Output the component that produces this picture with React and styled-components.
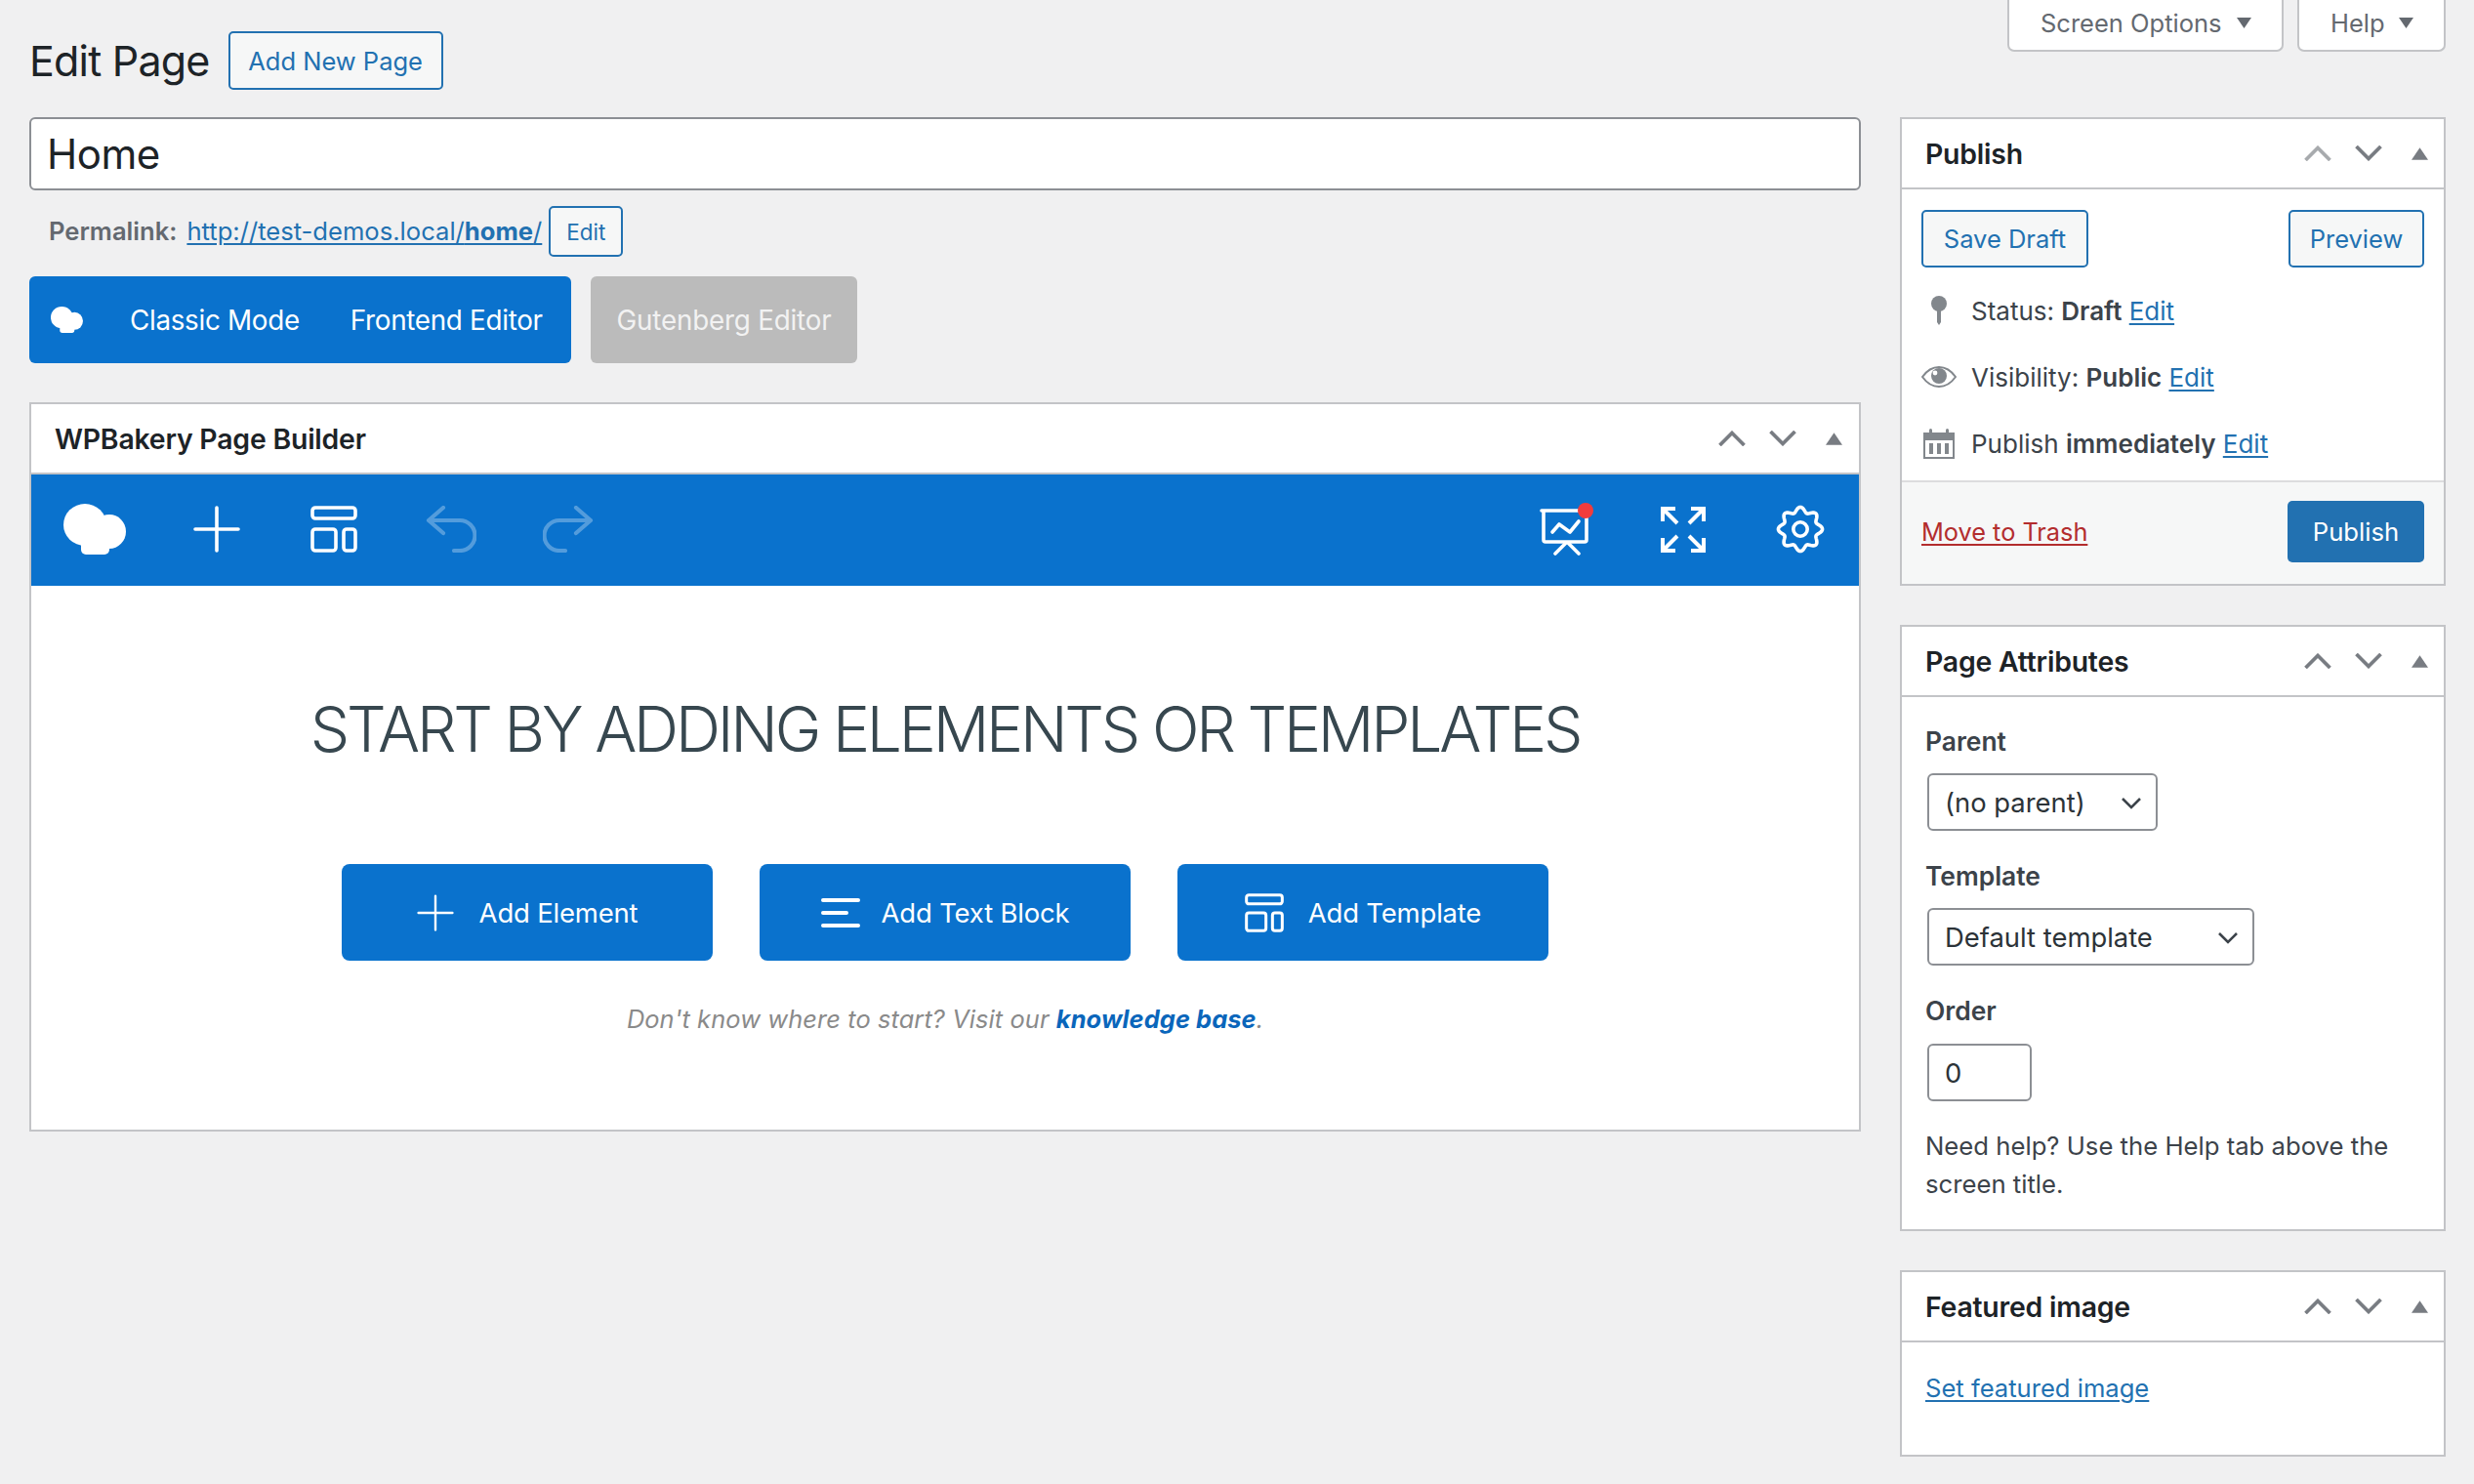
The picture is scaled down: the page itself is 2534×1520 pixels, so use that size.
import React from "react";
import styled, { createGlobalStyle } from "styled-components";

const Global = createGlobalStyle`
  * { box-sizing: border-box; }
  html, body { margin: 0; padding: 0; background: #f0f0f1; }
  body { font-family: Inter, "Noto Sans", "Liberation Sans", sans-serif; font-size: 26px; color: #3c434a; }
`;

const Page = styled.div`
  min-height: 1520px;
  padding: 0 29px 0 30px;
  background: #f0f0f1;
`;
const TopBar = styled.header`
  display: flex;
  justify-content: space-between;
  align-items: flex-start;
  height: 120px;
`;
const HeadingRow = styled.div`
  display: flex;
  align-items: center;
  gap: 19px;
  padding-top: 32px;
`;
const Title = styled.h1`
  margin: 0;
  font-size: 43px;
  line-height: 60px;
  font-weight: 400;
  color: #1d2327;
  letter-spacing: -0.8px;
`;
const OutlineBtn = styled.button`
  font-family: inherit;
  font-size: ${p => p.$size || 25.5}px;
  height: ${p => p.$h || 60}px;
  width: ${p => p.$w}px;
  padding: 0;
  flex: none;
  border: 2px solid #2271b1;
  border-radius: 5px;
  background: #f6f7f7;
  color: #2271b1;
`;
const MetaTabs = styled.div`
  display: flex;
  gap: 14px;
`;
const MetaTab = styled.div`
  display: flex;
  align-items: center;
  gap: ${p => p.$gap}px;
  width: ${p => p.$w}px;
  height: 53px;
  padding: 0 0 5px ${p => p.$pad}px;
  border: 2px solid #c3c4c7;
  border-top: 0;
  border-radius: 0 0 7px 7px;
  background: #fff;
  color: #646970;
  font-size: 25.5px;
`;
const Layout = styled.div`
  display: grid;
  grid-template-columns: 1876px 559px;
  gap: 40px;
  align-items: start;
`;
const MainCol = styled.main`
  display: flex;
  flex-direction: column;
`;
const SideCol = styled.aside`
  display: flex;
  flex-direction: column;
  gap: 40px;
`;
const TitleInput = styled.input`
  width: 100%;
  height: 75px;
  padding: 0 16px;
  font-family: inherit;
  font-size: 42px;
  color: #1d2327;
  background: #fff;
  border: 2px solid #8c8f94;
  border-radius: 6px;
  outline: none;
  letter-spacing: -0.5px;
`;
const PermalinkRow = styled.div`
  display: flex;
  align-items: center;
  gap: 7px;
  height: 52px;
  margin-top: 16px;
  padding-left: 20px;
  font-size: 25.6px;
  color: #646970;
`;
const PermaText = styled.span`
  padding-bottom: 2px;
`;
const PermaLabel = styled.strong`
  font-weight: 600;
  margin-right: 10px;
`;
const Link = styled.a`
  color: ${p => p.$color || "#2271b1"};
  text-decoration: underline;
  text-underline-offset: 3px;
  font-size: ${p => p.$size ? `${p.$size}px` : "inherit"};
`;
const ModeRow = styled.div`
  display: flex;
  gap: 20px;
  margin-top: 20px;
`;
const ModeBar = styled.div`
  display: flex;
  align-items: center;
  width: 555px;
  height: 89px;
  padding-left: 22px;
  background: #0a72cd;
  border-radius: 6px;
  color: #fff;
  font-size: 27.8px;
`;
const ModeLabel = styled.span`
  margin-left: ${p => p.$ml}px;
  letter-spacing: -0.3px;
`;
const GutenbergBtn = styled.div`
  display: flex;
  align-items: center;
  justify-content: center;
  width: 273px;
  height: 89px;
  background: #bbbbbb;
  border-radius: 6px;
  color: #f2f2f2;
  font-size: 27.8px;
  letter-spacing: -0.2px;
`;
const Panel = styled.section`
  background: #fff;
  border: 2px solid #c3c4c7;
  margin-top: ${p => p.$mt || 0}px;
`;
const PanelHeader = styled.div`
  display: flex;
  align-items: center;
  justify-content: space-between;
  height: 72px;
  padding: 0 0 0 ${p => p.$pl}px;
  border-bottom: 2px solid #c3c4c7;
`;
const PanelTitle = styled.h2`
  margin: 0;
  font-size: 28.4px;
  font-weight: 600;
  color: #1d2327;
  letter-spacing: -0.2px;
`;
const Handles = styled.div`
  display: flex;
  align-items: center;
  margin-right: ${p => p.$shift || 0}px;
`;
const Handle = styled.span`
  display: flex;
  justify-content: center;
  width: 52px;
`;
const Toolbar = styled.div`
  display: flex;
  align-items: center;
  justify-content: space-between;
  height: 114px;
  padding: 0 0 2px 5px;
  background: #0a72cd;
`;
const ToolGroup = styled.div`
  display: flex;
  align-items: center;
`;
const ToolItem = styled.div`
  display: flex;
  justify-content: center;
  align-items: center;
  width: 120px;
  margin-right: ${p => p.$mr || 0}px;
`;
const Body = styled.div`
  display: flex;
  flex-direction: column;
  align-items: center;
  height: 557px;
`;
const Heading = styled.h3`
  margin: 100px 0 0;
  font-size: 64px;
  line-height: 94px;
  font-weight: 300;
  color: #37474f;
  letter-spacing: -3.2px;
`;
const BigBtns = styled.div`
  display: flex;
  gap: 48px;
  margin-top: 91px;
`;
const BigBtn = styled.button`
  display: flex;
  align-items: center;
  justify-content: center;
  gap: ${p => p.$gap}px;
  width: 380px;
  height: 99px;
  padding: 0;
  border: 0;
  border-radius: 8px;
  background: #0a72cd;
  color: #fff;
  font-family: inherit;
  font-size: 27.5px;
  letter-spacing: -0.2px;
`;
const Hint = styled.p`
  margin: 40px 0 0;
  font-size: 25.4px;
  line-height: 40px;
  font-style: italic;
  color: #8a8a8a;
  letter-spacing: 0.1px;
`;
const HintLink = styled.a`
  color: #0a66bb;
  font-weight: 700;
`;
const PublishActions = styled.div`
  display: flex;
  justify-content: space-between;
  padding: 21px 20px 0;
`;
const MiscList = styled.div`
  padding: 10px 20px 4px;
`;
const MiscRow = styled.div`
  display: flex;
  align-items: center;
  height: 68px;
`;
const MiscIcon = styled.span`
  display: flex;
  justify-content: center;
  width: 36px;
  margin-right: 15px;
`;
const PublishFooter = styled.div`
  display: flex;
  align-items: center;
  justify-content: space-between;
  padding: 19px 20px 22px;
  background: #f6f7f7;
  border-top: 2px solid #dcdcde;
`;
const PublishBtn = styled.button`
  width: 140px;
  height: 63px;
  padding: 0;
  border: 0;
  border-radius: 5px;
  background: #2271b1;
  color: #fff;
  font-family: inherit;
  font-size: 25.7px;
`;
const Bold = styled.strong`
  font-weight: 600;
`;
const AttrBody = styled.div`
  padding: 28px 24px 27px;
`;
const FieldLabel = styled.label`
  display: block;
  font-size: 26.4px;
  line-height: 34px;
  font-weight: 600;
  color: #3c434a;
  margin-top: ${p => p.$mt || 0}px;
`;
const Select = styled.select`
  display: block;
  width: ${p => p.$w}px;
  height: 59px;
  margin: ${p => p.$mt || 15}px 0 0 2px;
  padding: 0 0 0 16px;
  appearance: none;
  font-family: inherit;
  font-size: 27.4px;
  color: #2c3338;
  background: #fff url("data:image/svg+xml,%3Csvg xmlns='http://www.w3.org/2000/svg' width='22' height='14' viewBox='0 0 22 14'%3E%3Cpath d='M2 3l9 9 9-9' fill='none' stroke='%233c434a' stroke-width='2.6'/%3E%3C/svg%3E") no-repeat right 14px center;
  border: 2px solid #8c8f94;
  border-radius: 6px;
`;
const NumberInput = styled.input`
  display: block;
  width: 107px;
  height: 59px;
  margin: 17px 0 0 2px;
  padding: 0 0 0 16px;
  font-family: inherit;
  font-size: 27.4px;
  color: #2c3338;
  background: #fff;
  border: 2px solid #8c8f94;
  border-radius: 6px;
`;
const Help = styled.p`
  margin: 26px 0 0;
  font-size: 25.7px;
  line-height: 39px;
  color: #3c434a;
`;
const FeaturedBody = styled.div`
  padding: 27px 24px 49px;
  line-height: 39px;
  font-size: 25.6px;
`;

const Tri = ({ up, w = 15, h = 11, c = "#646970" }) => (
  <svg width={w} height={h} viewBox="0 0 15 11">
    <path d={up ? "M7.5 0L15 11H0z" : "M0 0h15L7.5 11z"} fill={c} />
  </svg>
);
const Chev = ({ up, c = "#787c82" }) => (
  <svg width="28" height="16" viewBox="0 0 28 16">
    <path d={up ? "M1.5 15L14 2.5 26.5 15" : "M1.5 1L14 13.5 26.5 1"} fill="none" stroke={c} strokeWidth="3.7" />
  </svg>
);
const PanelHandles = ({ upColor, shift }) => (
  <Handles $shift={shift}>
    <Handle><Chev up c={upColor} /></Handle>
    <Handle><Chev /></Handle>
    <Handle><Tri up w={17} h={13} c="#787c82" /></Handle>
  </Handles>
);
const Logo = ({ w = 64, h = 52 }) => (
  <svg width={w} height={h} viewBox="0 0 64 52" fill="#fff">
    <ellipse cx="22" cy="21.5" rx="22" ry="21.5" />
    <ellipse cx="47" cy="28.5" rx="17" ry="17.5" />
    <rect x="18" y="34" width="29" height="18" rx="5" />
  </svg>
);
const PlusIcon = ({ s = 48, sw = 3.6 }) => (
  <svg width={s} height={s} viewBox="0 0 48 48" fill="none" stroke="#fff" strokeWidth={sw} strokeLinecap="round">
    <path d="M24 2v44M2 24h44" />
  </svg>
);
const TemplateIcon = ({ s = 48 }) => (
  <svg width={s} height={s} viewBox="0 0 48 48" fill="none" stroke="#fff" strokeWidth="3.6">
    <rect x="2" y="2" width="44" height="11" rx="3" />
    <rect x="2" y="24" width="24" height="22" rx="3" />
    <rect x="34" y="24" width="12" height="22" rx="3" />
  </svg>
);
const UndoIcon = ({ flip }) => (
  <svg width="52" height="48" viewBox="0 0 52 48" fill="none" stroke="rgba(255,255,255,0.3)" strokeWidth="4.2" strokeLinecap="round" strokeLinejoin="round" style={flip ? { transform: "scaleX(-1)" } : undefined}>
    <path d="M18 2L3 15l15 13M3 15h32a15.5 15.5 0 0 1 0 31h-6" />
  </svg>
);
const SlideIcon = () => (
  <svg width="56" height="54" viewBox="-2 0 56 54" fill="none" stroke="#fff" strokeWidth="3.6" strokeLinecap="round" strokeLinejoin="round">
    <path d="M1 8h44M3 8v30a2 2 0 0 0 2 2h40a2 2 0 0 0 2-2V12" />
    <path d="M12 30l7-8 11 8 9-11" />
    <path d="M26 41L15 52M28 41l11 11" />
    <circle cx="46" cy="8" r="8" fill="#f13c3c" stroke="none" />
  </svg>
);
const ExpandIcon = () => (
  <svg width="46" height="47" viewBox="0 0 46 47" fill="none" stroke="#fff" strokeWidth="4">
    <path d="M2 15V2h13M2 2l15 15" />
    <path d="M31 2h13v13M44 2L29 17" />
    <path d="M2 32v13h13M2 45l15-15" />
    <path d="M31 45h13V32M44 45L29 30" />
  </svg>
);
const gearPoints = Array.from({ length: 144 }, (_, i) => {
  const a = (i / 144) * Math.PI * 2;
  const r = 20 + 2.6 * Math.cos(8 * a);
  return `${(25 + r * Math.cos(a)).toFixed(2)},${(25 + r * Math.sin(a)).toFixed(2)}`;
}).join(" ");
const GearIcon = () => (
  <svg width="50" height="50" viewBox="0 0 50 50" fill="none" stroke="#fff" strokeWidth="3.6" strokeLinejoin="round">
    <polygon points={gearPoints} />
    <circle cx="25" cy="25" r="7.2" />
  </svg>
);
const LinesIcon = () => (
  <svg width="40" height="32" viewBox="0 0 40 32" fill="none" stroke="#fff" strokeWidth="4" strokeLinecap="round">
    <path d="M2 3h36M2 16h24M2 29h36" />
  </svg>
);
const Pin = () => (
  <svg width="18" height="30" viewBox="0 0 18 30" fill="#82878c">
    <circle cx="9" cy="8" r="8" />
    <path d="M7 14h4v13l-2 3-2-3z" />
  </svg>
);
const Eye = () => (
  <svg width="36" height="22" viewBox="0 0 36 22">
    <path d="M1 11C6 4 12 1 18 1s12 3 17 10c-5 7-11 10-17 10S6 18 1 11z" fill="none" stroke="#82878c" strokeWidth="2" />
    <circle cx="18" cy="10" r="8" fill="#82878c" />
    <circle cx="14" cy="7" r="2.4" fill="#fff" />
  </svg>
);
const Calendar = () => (
  <svg width="32" height="31" viewBox="0 0 32 31" fill="#82878c">
    <path fillRule="evenodd" d="M0 4h6V1.5a1.5 1.5 0 0 1 3 0V4h14V1.5a1.5 1.5 0 0 1 3 0V4h6v27H0zM2 12v17h28V12z" />
    <path d="M6 15h4v11H6zM14 15h4v11h-4zM22 15h4v11h-4z" />
  </svg>
);

export default function App() {
  return (
    <Page>
      <Global />
      <TopBar>
        <HeadingRow>
          <Title>Edit Page</Title>
          <OutlineBtn $w={220}>Add New Page</OutlineBtn>
        </HeadingRow>
        <MetaTabs>
          <MetaTab $w={283} $pad={32} $gap={15}>Screen Options <Tri /></MetaTab>
          <MetaTab $w={152} $pad={32} $gap={14}>Help <Tri /></MetaTab>
        </MetaTabs>
      </TopBar>
      <Layout>
        <MainCol>
          <TitleInput readOnly value="Home" />
          <PermalinkRow>
            <PermaText>
              <PermaLabel>Permalink:</PermaLabel>
              <Link href="#">http://test-demos.local/<strong>home</strong>/</Link>
            </PermaText>
            <OutlineBtn $w={76} $h={52} $size={22.5}>Edit</OutlineBtn>
          </PermalinkRow>
          <ModeRow>
            <ModeBar>
              <Logo w={33} h={27} />
              <ModeLabel $ml={48}>Classic Mode</ModeLabel>
              <ModeLabel $ml={52}>Frontend Editor</ModeLabel>
            </ModeBar>
            <GutenbergBtn>Gutenberg Editor</GutenbergBtn>
          </ModeRow>
          <Panel $mt={40}>
            <PanelHeader $pl={24}>
              <PanelTitle>WPBakery Page Builder</PanelTitle>
              <PanelHandles />
            </PanelHeader>
            <Toolbar>
              <ToolGroup>
                <ToolItem $mr={5}><Logo /></ToolItem>
                <ToolItem><PlusIcon /></ToolItem>
                <ToolItem><TemplateIcon /></ToolItem>
                <ToolItem><UndoIcon /></ToolItem>
                <ToolItem><UndoIcon flip /></ToolItem>
              </ToolGroup>
              <ToolGroup>
                <ToolItem><SlideIcon /></ToolItem>
                <ToolItem><ExpandIcon /></ToolItem>
                <ToolItem><GearIcon /></ToolItem>
              </ToolGroup>
            </Toolbar>
            <Body>
              <Heading>START BY ADDING ELEMENTS OR TEMPLATES</Heading>
              <BigBtns>
                <BigBtn $gap={26}><PlusIcon s={38} sw={3} />Add Element</BigBtn>
                <BigBtn $gap={22}><LinesIcon />Add Text Block</BigBtn>
                <BigBtn $gap={25}><TemplateIcon s={40} />Add Template</BigBtn>
              </BigBtns>
              <Hint>Don't know where to start? Visit our <HintLink>knowledge base</HintLink>.</Hint>
            </Body>
          </Panel>
        </MainCol>
        <SideCol>
          <Panel>
            <PanelHeader $pl={24}>
              <PanelTitle>Publish</PanelTitle>
              <PanelHandles upColor="#a7aaad" shift={-1} />
            </PanelHeader>
            <PublishActions>
              <OutlineBtn $w={171} $h={59}>Save Draft</OutlineBtn>
              <OutlineBtn $w={139} $h={59}>Preview</OutlineBtn>
            </PublishActions>
            <MiscList>
              <MiscRow><MiscIcon><Pin /></MiscIcon><span>Status: <Bold>Draft</Bold> <Link href="#">Edit</Link></span></MiscRow>
              <MiscRow><MiscIcon><Eye /></MiscIcon><span>Visibility: <Bold>Public</Bold> <Link href="#">Edit</Link></span></MiscRow>
              <MiscRow><MiscIcon><Calendar /></MiscIcon><span>Publish <Bold>immediately</Bold> <Link href="#">Edit</Link></span></MiscRow>
            </MiscList>
            <PublishFooter>
              <Link href="#" $color="#b32d2e" $size={25.3}>Move to Trash</Link>
              <PublishBtn>Publish</PublishBtn>
            </PublishFooter>
          </Panel>
          <Panel>
            <PanelHeader $pl={24}>
              <PanelTitle>Page Attributes</PanelTitle>
              <PanelHandles shift={-1} />
            </PanelHeader>
            <AttrBody>
              <FieldLabel>Parent</FieldLabel>
              <Select $w={236} $mt={16}><option>(no parent)</option></Select>
              <FieldLabel $mt={29}>Template</FieldLabel>
              <Select $w={335} $mt={16}><option>Default template</option></Select>
              <FieldLabel $mt={29}>Order</FieldLabel>
              <NumberInput readOnly value="0" />
              <Help>Need help? Use the Help tab above the screen title.</Help>
            </AttrBody>
          </Panel>
          <Panel>
            <PanelHeader $pl={24}>
              <PanelTitle>Featured image</PanelTitle>
              <PanelHandles shift={-1} />
            </PanelHeader>
            <FeaturedBody><Link href="#">Set featured image</Link></FeaturedBody>
          </Panel>
        </SideCol>
      </Layout>
    </Page>
  );
}
